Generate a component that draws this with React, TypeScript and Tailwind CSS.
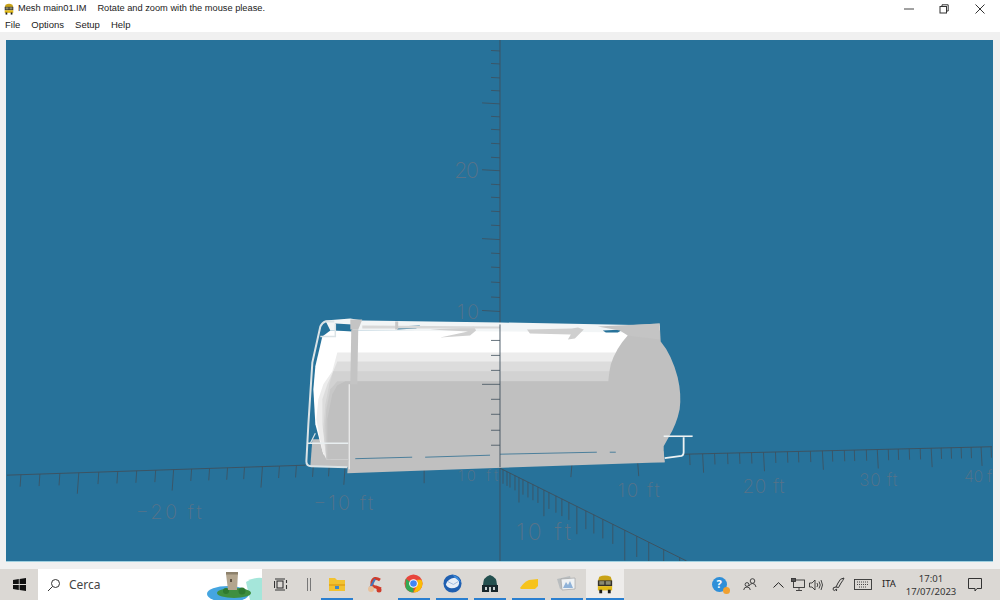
import React from 'react';

const FONT = "font-['Liberation_Sans',Arial,sans-serif]";
const AXIS = '#3f4f5c';
const LABEL = '#587389';

// [x, long?] left half of the horizontal axis
const leftTicks: [number, boolean][] = [
  [20, false], [39, false], [59, false], [78, true], [98, false], [117, false], [136, false], [155, false], [173, true],
  [191, false], [209, false], [227, false], [244, false], [262, true], [279, false], [296, false], [313, false], [329, false], [345, true],
];
const rightTicks: [number, boolean][] = [
  [690, false], [703, true], [715, false], [728, false], [740, false], [752, false], [764, true], [776, false], [788, false], [799, false], [811, false],
  [823, true], [833, false], [845, false], [855, false], [867, false], [878, true], [889, false], [899, false], [910, false], [921, false],
  [932, true], [942, false], [952, false], [962, false], [972, false], [982, true], [992, false],
];
const diagTicks: [number, boolean][] = [
  [503, false], [507, false], [510, false], [515, false], [519, true], [523, false], [528, false], [533, false], [538, false], [544, true],
  [549, false], [556, false], [562, false], [569, false], [577, true], [586, false], [594, false], [603, false], [613, false], [625, true],
  [637, false], [649, false], [664, false], [680, false],
];
const vertTicks: [number, boolean][] = [
  [51, false], [64, false], [78, false], [91, false], [104, true], [117, false], [130, false], [144, false], [158, false], [171, true],
  [185, false], [198, false], [212, false], [226, false], [240, true], [254, false], [268, false], [283, false], [298, false], [312, true],
  [341, false], [356, false], [371, false], [385, true], [400, false], [415, false], [431, false], [446, false],
];

const leftY = (x: number) => 476 - ((x - 6) / 299) * 10;
const rightY = (x: number) => 455 - ((x - 685) / 308) * 7.5;
const diagY = (x: number) => 469 + ((x - 500) / 187) * 93;

function Scene() {
  return (
    <svg viewBox="6 40 987 522" className="block h-full w-full">
      {/* axes behind the tank */}
      <line x1="6" y1="476" x2="305" y2="466" stroke={AXIS} strokeWidth="0.9" />
      <line x1="685" y1="455" x2="993" y2="447.5" stroke={AXIS} strokeWidth="0.9" />
      <line x1="500" y1="469" x2="687" y2="562" stroke={AXIS} strokeWidth="0.9" />
      <line x1="500" y1="40" x2="500" y2="562" stroke={AXIS} strokeWidth="0.9" />
      {leftTicks.map(([x, long]) => (
        <line key={x} x1={x} y1={leftY(x)} x2={x - (long ? 1.5 : 0.8)} y2={leftY(x) + (long ? 21 : 12)} stroke={AXIS} strokeWidth="0.8" />
      ))}
      <line x1="424" y1="470" x2="424" y2="484" stroke={AXIS} strokeWidth="0.8" />
      <line x1="572" y1="466" x2="571" y2="478" stroke={AXIS} strokeWidth="0.8" />
      <line x1="638" y1="464" x2="639" y2="477" stroke={AXIS} strokeWidth="0.8" />
      {rightTicks.map(([x, long]) => (
        <line key={x} x1={x} y1={rightY(x)} x2={x + (long ? 1 : 0.4)} y2={rightY(x) + (long ? 19 : 11)} stroke={AXIS} strokeWidth="0.8" />
      ))}
      {diagTicks.map(([x, long]) => (
        <line key={x} x1={x} y1={diagY(x)} x2={x} y2={diagY(x) + (long ? 24 : 14) + (x - 500) * 0.05} stroke={AXIS} strokeWidth="0.8" />
      ))}
      {vertTicks.map(([y, long]) => (
        <line key={y} x1="500" y1={y} x2={long ? 482 : 491} y2={y - (long ? 1 : 0.5)} stroke={AXIS} strokeWidth="0.8" />
      ))}

      {/* tank shell, lightest band first */}
      <path fill="#c0c0c0" d="M310 467 L312 440 L325 440 L348 440 L348 468 Z" />
      <path fill="#ffffff" d="M322 337 L330 331 H640 V460 H330 L323 455 L315 425 L313 390 L315 367 Z" />
      <path fill="#ececec" d="M337 353 H640 V460 H326 L322 452 L316 420 L318 400 L323 385 L332 372 Z" />
      <path fill="#dcdcdc" d="M337 362 H640 V460 H326 L322 425 L322 400 L327 385 L333 372 Z" />
      <path fill="#d2d2d2" d="M333 372 H640 V460 H326 L323 430 L325 405 L329 385 Z" />
      <path fill="#c8c8c8" d="M337 382 H640 V460 H326 L325 425 L326 410 L330 390 Z" />
      <path fill="#c0c0c0" d="M345 382 H640 V460 H327 L327 420 L332 395 L337 386 Z" />

      {/* end cap */}
      <path fill="#c0c0c0" d="M628 336 Q616 349 611 365 Q608 378 608 395 L608 462 L665 463 L664 457 L664 447 L669 438 Q677 425 680 410 Q682 395 678 378 Q672 355 661 342 L660 324 L625 326 Z" />

      {/* front lip with dark seams */}
      <polygon fill="#c0c0c0" points="348,458 664,452 665,463 347,474" />
      <g stroke="#2f6f92" strokeWidth="0.8">
        <line x1="355" y1="459.5" x2="412" y2="458" />
        <line x1="425" y1="458" x2="490" y2="456" />
        <line x1="500" y1="455" x2="597" y2="453" />
        <line x1="610" y1="453" x2="616" y2="453" />
      </g>

      {/* roof walkway */}
      <polygon fill="#f2f5f6" points="325,321 350,319 362,321 500,323 660,326 660,331 640,333 330,331" />
      <polygon fill="#27729a" points="335,324 352,325 352,332 335,331" />
      <polygon fill="#27729a" points="397,327 420,326 416,329 397,330" />
      <polygon fill="#27729a" points="603,331 623,330 618,333 606,333" />
      <polygon fill="#c4c4c4" points="350,320 362,320 358,330 350,330" />
      <polygon fill="#cfcfcf" points="527,330 572,329 578,328 584,330 575,339 568,340 571,335 530,334" />
      <polygon fill="#c4c4c4" points="598,327 660,324 660,340 628,336 620,331" />
      <polygon fill="#cfcfcf" points="430,330 470,328 474,327 476,331 470,336 440,338 468,332" />
      <polygon fill="#d8d8d8" points="362,326 500,327 500,329 362,329" />
      <rect x="395" y="322" width="3" height="8" fill="#c8c8c8" />

      {/* ladder and rails */}
      <polygon fill="#c4c4c4" points="351,330 358,330 357,385 350,385" />
      <line x1="349" y1="385" x2="349" y2="470" stroke="#e8e8e8" strokeWidth="1.4" />
      <path d="M334 322 L325 322 Q322 323 320 327 L312 363 L308 425 L306 462 Q306 467 311 467 L347 468" fill="none" stroke="#dbe3e6" strokeWidth="2" strokeLinejoin="round" />
      <path d="M320 337 L335 337 L335 324" fill="none" stroke="#dbe3e6" strokeWidth="1.5" />
      <path d="M307 444 L348 444" fill="none" stroke="#e8eef0" strokeWidth="1.6" />
      <path d="M310 444 L315 434" fill="none" stroke="#dbe3e6" strokeWidth="1.2" />
      <path d="M664 437 L693 437" fill="none" stroke="#eef2f3" strokeWidth="1.6" />
      <path d="M684 438 L684 453 Q684 457 680 457 L665 459" fill="none" stroke="#eef2f3" strokeWidth="1.8" />

      {/* axis and ticks showing in front of the tank */}
      <line x1="500" y1="325" x2="500" y2="468" stroke={AXIS} strokeWidth="0.9" />
      {vertTicks.filter(([y]) => y > 335).map(([y, long]) => (
        <line key={y} x1="500" y1={y} x2={long ? 482 : 491} y2={y} stroke={AXIS} strokeWidth="0.8" />
      ))}

      {/* scale labels */}
      <g fill={LABEL} fontFamily="Inter, 'Liberation Sans', sans-serif" fontWeight="200">
        <text x="454" y="178" fontSize="22" textLength="25">20</text>
        <text x="457" y="320" fontSize="20" textLength="22">10</text>
        <text x="135" y="520" fontSize="20" textLength="66">−20 ft</text>
        <text x="313" y="511" fontSize="20" textLength="60">−10 ft</text>
        <text x="458" y="482" fontSize="15" textLength="40">10 ft</text>
        <text x="516" y="541" fontSize="23" textLength="55">10 ft</text>
        <text x="618" y="498" fontSize="19" textLength="42">10 ft</text>
        <text x="743" y="494" fontSize="19" textLength="42">20 ft</text>
        <text x="860" y="487" fontSize="17" textLength="38">30 ft</text>
        <text x="965" y="483" fontSize="16" textLength="28">40 f</text>
      </g>
    </svg>
  );
}

function TruckIcon({ size = 14 }: { size?: number }) {
  return (
    <svg width={size} height={size} viewBox="0 0 14 14">
      <path d="M3 2 Q7 0 11 2 L12 5 L2 5 Z" fill="#c9a318" />
      <rect x="2" y="4.5" width="10" height="4" fill="#33302a" />
      <rect x="3" y="5" width="3.5" height="2.5" fill="#8a8a70" />
      <rect x="7.5" y="5" width="3.5" height="2.5" fill="#8a8a70" />
      <rect x="2" y="8.5" width="10" height="3" fill="#e0b915" />
      <rect x="3" y="11" width="2" height="2.5" fill="#1d1b16" />
      <rect x="9" y="11" width="2" height="2.5" fill="#1d1b16" />
    </svg>
  );
}

function TaskIcon({ active, running = true, children }: { active?: boolean; running?: boolean; children: React.ReactNode }) {
  return (
    <div className={`flex h-full w-[38.3px] flex-col ${active ? 'bg-[#eeecea]' : ''}`}>
      <div className="flex flex-1 items-center justify-center">{children}</div>
      {running && <div className={`h-[2px] bg-[#2a7fd0] ${active ? '' : 'mx-[3px]'}`} />}
    </div>
  );
}

function Taskbar() {
  return (
    <div className="flex h-[31px] items-stretch bg-[#dbd8d4] font-['Noto_Sans',sans-serif]">
      <div className="flex w-[38px] items-center justify-center">
        <svg width="13" height="13" viewBox="0 0 13 13" fill="#111">
          <path d="M0 2 L5.8 1.1 V6.1 H0 Z M6.6 1 L13 0 V6.1 H6.6 Z M0 6.9 H5.8 V11.9 L0 11 Z M6.6 6.9 H13 V13 L6.6 12 Z" />
        </svg>
      </div>
      <div className="flex w-[224px] items-center overflow-hidden bg-white pl-[9px]">
        <svg width="14" height="14" viewBox="0 0 14 14" fill="none" stroke="#333" strokeWidth="1">
          <circle cx="8.5" cy="5.5" r="4" />
          <path d="M5.5 8.5 L1 13" />
        </svg>
        <span className="ml-[8px] text-[12px] text-[#444]">Cerca</span>
        <svg width="56" height="31" viewBox="0 0 56 31" className="ml-auto shrink-0">
          <path d="M40 13 Q48 8 56 9 V31 H44 Z" fill="#a5e6da" />
          <ellipse cx="22" cy="25" rx="21" ry="8" fill="#45a5e0" />
          <ellipse cx="28" cy="24" rx="17" ry="5" fill="#3f8f3f" />
          <circle cx="20" cy="22" r="3" fill="#2f7a30" />
          <circle cx="36" cy="22" r="3.5" fill="#2f7a30" />
          <polygon points="20,5 32,4 31,21 22,21" fill="#b3a58e" />
          <rect x="24" y="10" width="2" height="3" fill="#5d5142" />
          <rect x="20" y="3" width="12" height="2.5" fill="#8d816c" />
        </svg>
      </div>
      <div className="flex w-[38px] items-center justify-center">
        <svg width="14" height="13" viewBox="0 0 14 13" fill="none" stroke="#333" strokeWidth="1.1">
          <rect x="3" y="3" width="6" height="7" />
          <path d="M1 1 H11 M1 12 H11 M12.5 2 V5 M12.5 7 V11 M0.5 3 V10" />
        </svg>
      </div>
      <div className="flex w-[18px] items-center justify-center">
        <div className="h-[13px] w-[4px] border-x border-[#777]" />
      </div>
      <TaskIcon>
        <svg width="16" height="14" viewBox="0 0 16 14">
          <path d="M0 1 H6 L8 3 H16 V14 H0 Z" fill="#f2c230" />
          <rect x="0" y="7" width="16" height="2" fill="#e5a91d" />
          <rect x="6" y="9" width="4" height="3" fill="#3f88c8" />
        </svg>
      </TaskIcon>
      <TaskIcon running={false}>
        <svg width="18" height="18" viewBox="0 0 18 18" fill="none">
          <path d="M14 4 Q8 0 6 6 Q5 11 10 11 L15 13" stroke="#cf3b2a" strokeWidth="3" />
          <path d="M9 3 L4 12" stroke="#3f78c0" strokeWidth="2" />
          <circle cx="5" cy="13" r="3" fill="#e8c09a" />
          <circle cx="13" cy="14" r="2.5" fill="#cf3b2a" />
        </svg>
      </TaskIcon>
      <TaskIcon>
        <svg width="19" height="19" viewBox="0 0 20 20">
          <circle cx="10" cy="10" r="9.5" fill="#e8453c" />
          <path d="M10 19.5 A9.5 9.5 0 0 1 1.8 14.8 L1.8 5 L6 8 L10 14 Z" fill="#34a853" />
          <path d="M19.5 10 A9.5 9.5 0 0 1 10 19.5 L14 11 V6 H18.3 Q19.5 8 19.5 10 Z" fill="#fbbc05" />
          <circle cx="10" cy="10" r="4.6" fill="#fff" />
          <circle cx="10" cy="10" r="3.5" fill="#4285f4" />
        </svg>
      </TaskIcon>
      <TaskIcon>
        <svg width="19" height="19" viewBox="0 0 20 20">
          <circle cx="10" cy="10" r="9.5" fill="#1f5fb0" />
          <path d="M3 11 Q5 5 12 4 Q17 5 17 10 Q16 15 9 15 Q5 15 3 11 Z" fill="#e8eef6" />
          <path d="M5 8 L11 11 L16 8" stroke="#9db8dc" strokeWidth="1" fill="none" />
          <path d="M10 1 Q16 2 19 9 L15 6 Q12 3 10 1 Z" fill="#3f8fe0" />
        </svg>
      </TaskIcon>
      <TaskIcon>
        <svg width="18" height="20" viewBox="0 0 18 20">
          <path d="M2 11 Q2 3 9 1 Q16 3 16 11 Z" fill="#24504f" />
          <rect x="1" y="11" width="16" height="7" fill="#17272c" />
          <rect x="4" y="13" width="2" height="3" fill="#c8d0d0" />
          <rect x="8" y="13" width="2" height="5" fill="#c8d0d0" />
          <rect x="12" y="13" width="2" height="3" fill="#c8d0d0" />
        </svg>
      </TaskIcon>
      <TaskIcon>
        <svg width="18" height="10" viewBox="0 0 18 10">
          <path d="M0 9 Q4 3 9 1 L18 0 V7 L15 10 H1 Z" fill="#f6c31c" />
        </svg>
      </TaskIcon>
      <TaskIcon>
        <svg width="19" height="16" viewBox="0 0 19 16">
          <polygon points="0,3 13,0 15,9 3,13" fill="#b9bdbf" />
          <polygon points="4,3 18,2 18,13 5,14" fill="#eef1f3" stroke="#9a9a9a" strokeWidth="0.6" />
          <path d="M6 12 L9 6 L11 9 L13 5 L16 12 Z" fill="#8fb2d8" />
        </svg>
      </TaskIcon>
      <TaskIcon active>
        <TruckIcon size={20} />
      </TaskIcon>

      <div className="ml-auto flex items-center text-[#222]">
        <div className="flex w-[30px] justify-center">
          <div className="relative flex h-[15px] w-[15px] items-center justify-center rounded-full bg-[#2f8fd8] text-[11px] font-bold text-white">
            ?
            <div className="absolute -bottom-[2px] -right-[3px] h-[7px] w-[7px] rounded-full bg-[#f0a030]" />
          </div>
        </div>
        <div className="flex w-[32px] justify-center">
          <svg width="14" height="13" viewBox="0 0 14 13" fill="none" stroke="#333" strokeWidth="0.9">
            <circle cx="9.5" cy="3" r="2.3" />
            <path d="M6 8 Q7 5.5 9.5 5.5 Q12.5 5.5 13 9" />
            <circle cx="4" cy="6.5" r="1.9" />
            <path d="M0.7 12 Q1 9 4 9 Q7 9 7.3 12" />
          </svg>
        </div>
        <div className="flex w-[24px] justify-center">
          <svg width="11" height="6" viewBox="0 0 11 6" fill="none" stroke="#222" strokeWidth="1">
            <path d="M0.5 5.5 L5.5 0.7 L10.5 5.5" />
          </svg>
        </div>
        <div className="flex w-[16px] justify-center">
          <svg width="14" height="13" viewBox="0 0 14 13" fill="none" stroke="#333" strokeWidth="0.9">
            <rect x="2.5" y="2" width="11" height="7.5" />
            <path d="M8 9.5 V12 M5 12.5 H11" />
            <rect x="0.5" y="0.5" width="4" height="3" fill="#555" />
          </svg>
        </div>
        <div className="flex w-[20px] justify-center">
          <svg width="14" height="12" viewBox="0 0 14 12" fill="none" stroke="#333" strokeWidth="0.9">
            <path d="M0.5 4 H3 L6 1 V11 L3 8 H0.5 Z" />
            <path d="M8 4 Q9.5 6 8 8 M10 2.5 Q12.5 6 10 9.5 M12 1 Q15 6 12 11" />
          </svg>
        </div>
        <div className="flex w-[24px] justify-center">
          <svg width="13" height="15" viewBox="0 0 13 15" fill="none" stroke="#333" strokeWidth="1">
            <path d="M12 1 Q8 1 6 6 L4 10 L6.5 10.5 L9 6 Q11 3.5 12 1 Z" />
            <path d="M4 10 Q0.5 10 1 12.5 Q2 14.5 4 12.5 Q5 11 4.5 14" />
          </svg>
        </div>
        <div className="flex w-[26px] justify-center">
          <svg width="18" height="11" viewBox="0 0 18 11" fill="none" stroke="#333" strokeWidth="0.9">
            <rect x="0.5" y="0.5" width="17" height="10" />
            <path d="M3 3 H15 M3 5.5 H15 M5 8 H13" strokeDasharray="1 1" />
          </svg>
        </div>
        <div className="flex w-[26px] justify-center text-[9.5px]">ITA</div>
        <div className="flex w-[58px] flex-col items-center text-[9.5px] leading-[13px] text-[#333]">
          <span>17:01</span>
          <span>17/07/2023</span>
        </div>
        <div className="flex w-[30px] justify-center">
          <svg width="14" height="14" viewBox="0 0 14 14" fill="none" stroke="#333" strokeWidth="1">
            <path d="M0.5 0.5 H13.5 V10.5 H9 L7 13 L7 10.5 H0.5 Z" />
          </svg>
        </div>
        <div className="h-full w-[10px]" />
      </div>
    </div>
  );
}

export default function App() {
  return (
    <div className={`flex h-[600px] w-[1000px] flex-col overflow-hidden bg-[#f0f0f0] ${FONT}`}>
      <div className="flex h-[18px] items-center bg-white pl-[3px] text-[9.25px] text-[#222]">
        <TruckIcon size={12} />
        <span className="ml-[3px]">Mesh main01.IM</span>
        <span className="ml-[11px]">Rotate and zoom with the mouse please.</span>
        <div className="ml-auto flex items-center pr-[15px]">
          <svg width="10" height="10" viewBox="0 0 10 10" stroke="#444" strokeWidth="1">
            <path d="M0 5 H10" />
          </svg>
          <svg width="10" height="10" viewBox="0 0 10 10" fill="none" stroke="#333" strokeWidth="1" className="ml-[25px]">
            <rect x="1" y="2.5" width="6.5" height="6.5" />
            <path d="M3 2.5 V0.8 H9.2 V7 H7.5" />
          </svg>
          <svg width="10" height="10" viewBox="0 0 10 10" stroke="#333" strokeWidth="1" className="ml-[26px]">
            <path d="M0.5 0.5 L9.5 9.5 M9.5 0.5 L0.5 9.5" />
          </svg>
        </div>
      </div>
      <div className="flex h-[14px] items-center gap-[11px] bg-white pl-[5px] text-[9.5px] text-[#222]">
        <span>File</span>
        <span>Options</span>
        <span>Setup</span>
        <span>Help</span>
      </div>
      <div className="flex min-h-0 flex-1 flex-col pb-[7px] pl-[6px] pr-[7px] pt-[8px]">
        <div className="min-h-0 flex-1 border-b border-[#9fd0e0] bg-[#27729a]">
          <Scene />
        </div>
      </div>
      <Taskbar />
    </div>
  );
}
